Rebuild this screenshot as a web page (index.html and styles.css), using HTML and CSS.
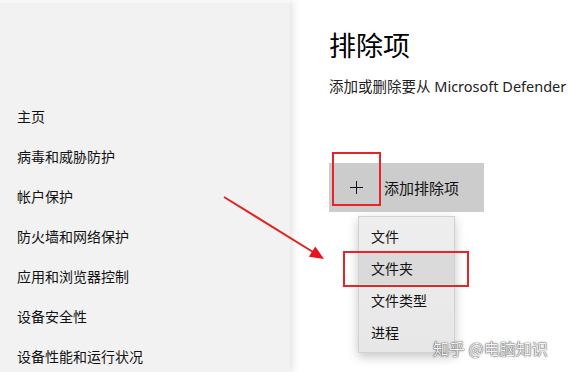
FILE: index.html
```html
<!DOCTYPE html>
<html lang="zh-CN">
<head>
<meta charset="utf-8">
<title>排除项</title>
<link rel="stylesheet" href="styles.css">
</head>
<body>
<div class="page">
  <nav class="nav">
    <div class="nav-item">主页</div>
    <div class="nav-item">病毒和威胁防护</div>
    <div class="nav-item">帐户保护</div>
    <div class="nav-item">防火墙和网络保护</div>
    <div class="nav-item">应用和浏览器控制</div>
    <div class="nav-item">设备安全性</div>
    <div class="nav-item">设备性能和运行状况</div>
  </nav>
  <main class="main">
    <h1 class="title">排除项</h1>
    <p class="subtitle">添加或删除要从 Microsoft Defender</p>
    <div class="btn-wrap">
      <div class="add-btn">
        <span class="plus"></span>
        <span class="add-label">添加排除项</span>
      </div>
      <div class="mark mark-plus"></div>
      <div class="menu">
        <div class="menu-item">文件</div>
        <div class="menu-item active">文件夹</div>
        <div class="menu-item">文件类型</div>
        <div class="menu-item">进程</div>
        <div class="mark mark-folder"></div>
      </div>
    </div>
  </main>
  <svg class="arrow" width="568" height="372" viewBox="0 0 568 372">
    <line x1="224" y1="197" x2="313" y2="252" stroke="#e02424" stroke-width="2"/>
    <polygon points="324,259 308.9,256.7 315.3,246.5" fill="#e8141c"/>
  </svg>
  <div class="watermark">知乎 @电脑知识</div>
</div>
</body>
</html>
```
FILE: styles.css
```css
* { box-sizing: border-box; }
html, body { margin: 0; padding: 0; }
body {
  background: #ffffff;
  font-family: "Segoe UI", "Noto Sans", "Noto Sans CJK SC", sans-serif;
  color: #000;
}
.page {
  position: relative;
  width: 568px;
  height: 372px;
  overflow: hidden;
  display: flex;
}
.nav {
  width: 290px;
  flex: none;
  height: 372px;
  background: #f2f2f2;
  border-top: 3px solid #f7f7f7;
  padding-top: 93px;
  padding-left: 17px;
  box-shadow: 2px 0 8px rgba(0, 0, 0, 0.13);
  position: relative;
  z-index: 1;
}
.nav-item {
  height: 40px;
  line-height: 40px;
  font-size: 14px;
  font-family: "Noto Sans CJK SC", sans-serif;
  color: #111;
  white-space: nowrap;
}
.main {
  flex: 1;
  min-width: 0;
  padding-left: 39px;
  white-space: nowrap;
  overflow: hidden;
}
.title {
  margin: 27px 0 0 0;
  font-size: 27px;
  line-height: 36px;
  font-weight: 400;
  font-family: "Noto Sans CJK SC", sans-serif;
  color: #000;
}
.subtitle {
  margin: 13px 0 0 0;
  font-size: 14.5px;
  line-height: 20px;
  color: #222;
  font-family: "Noto Sans", "Noto Sans CJK SC", sans-serif;
}
.btn-wrap {
  position: relative;
  margin-top: 67px;
  width: 155px;
}
.add-btn {
  width: 155px;
  height: 49px;
  background: #cccccc;
  display: flex;
  align-items: center;
  padding-left: 21px;
}
.plus {
  position: relative;
  width: 13px;
  height: 13px;
  flex: none;
}
.plus::before, .plus::after {
  content: "";
  position: absolute;
  background: #111;
}
.plus::before { left: 6px; top: 0; width: 1px; height: 13px; }
.plus::after { top: 6px; left: 0; width: 13px; height: 1px; }
.add-label {
  margin-left: 21px;
  font-size: 15px;
  font-family: "Noto Sans CJK SC", sans-serif;
  color: #111;
}
.mark {
  position: absolute;
  border: 2px solid #e3262b;
}
.mark-plus {
  left: 3px;
  top: -11px;
  width: 49px;
  height: 54px;
}
.menu {
  position: absolute;
  left: 29px;
  top: 53px;
  width: 97px;
  height: 137px;
  background: linear-gradient(#eeeeee, #e7e7e7);
  border: 1px solid #d2d2d2;
  box-shadow: 0 4px 10px rgba(0, 0, 0, 0.22);
  padding-top: 3px;
}
.menu-item {
  height: 32px;
  line-height: 32px;
  padding-left: 12px;
  font-size: 14px;
  font-family: "Noto Sans CJK SC", sans-serif;
  color: #111;
}
.menu-item.active { background: #dadada; }
.mark-folder {
  left: -16px;
  top: 34px;
  width: 126px;
  height: 36px;
}
.arrow {
  position: absolute;
  left: 0;
  top: 0;
  z-index: 2;
  pointer-events: none;
}
.watermark {
  position: absolute;
  left: 433px;
  top: 338px;
  font-size: 16px;
  line-height: 20px;
  font-family: "Noto Sans CJK SC", sans-serif;
  color: #f4f4f4;
  text-shadow: 0 0 1px rgba(0, 0, 0, 0.7), 0 0 1px rgba(0, 0, 0, 0.5), 0 0 3px rgba(0, 0, 0, 0.25);
  z-index: 3;
  white-space: nowrap;
}
```
